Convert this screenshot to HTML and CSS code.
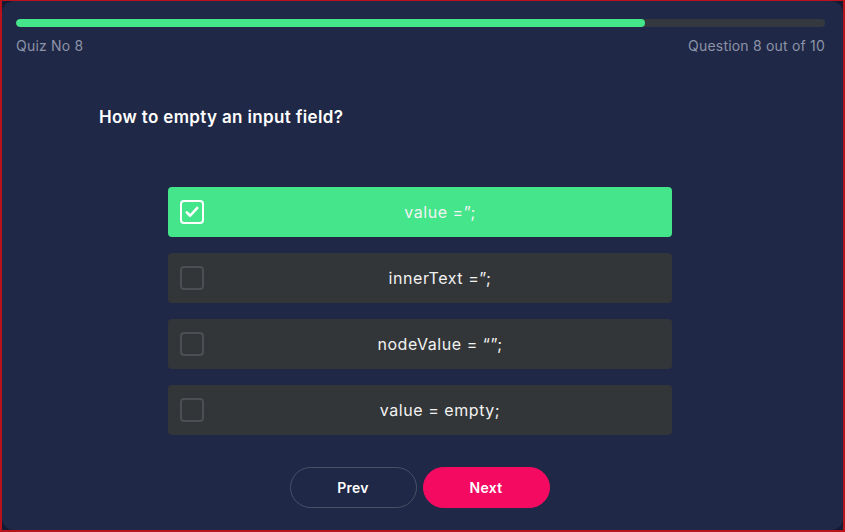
FILE: index.html
```html
<!DOCTYPE html>
<html>
<head>
<meta charset="utf-8">
<link rel="stylesheet" href="styles.css">
</head>
<body>
<div class="frame">
  <div class="card">
    <div class="progress"><div class="fill" style="width:77.8%"></div></div>
    <div class="meta">
      <span>Quiz No 8</span>
      <span>Question 8 out of 10</span>
    </div>
    <h1 class="question">How to empty an input field?</h1>
    <div class="options">
      <div class="option selected">
        <span class="box"><svg viewBox="0 0 24 24" width="18" height="18"><path d="M5 12.5l4.5 4.5L19 6.5" fill="none" stroke="#fff" stroke-width="3.4" stroke-linecap="round" stroke-linejoin="round"/></svg></span>
        <span class="label">value =”;</span>
      </div>
      <div class="option">
        <span class="box"></span>
        <span class="label">innerText =”;</span>
      </div>
      <div class="option">
        <span class="box"></span>
        <span class="label">nodeValue = “”;</span>
      </div>
      <div class="option">
        <span class="box"></span>
        <span class="label">value = empty;</span>
      </div>
    </div>
    <div class="buttons">
      <button class="btn prev">Prev</button>
      <button class="btn next">Next</button>
    </div>
  </div>
</div>
</body>
</html>
```

FILE: styles.css
```css
html, body {
  margin: 0;
  padding: 0;
  width: 845px;
  height: 532px;
  overflow: hidden;
  font-family: "Inter", "Noto Sans", sans-serif;
}
.frame {
  box-sizing: border-box;
  width: 845px;
  height: 532px;
  border-style: solid;
  border-color: #b8121c;
  border-width: 1px 2px 2px 2px;
  background: #141a33;
}
.card {
  box-sizing: border-box;
  height: 100%;
  background: #1f2846;
  border-radius: 12px;
  padding: 18px 18px 0 14px;
}
.progress {
  height: 8px;
  background: #34393f;
  border-radius: 4px;
  overflow: hidden;
}
.fill {
  height: 100%;
  background: #45e68b;
  border-radius: 4px;
}
.meta {
  display: flex;
  justify-content: space-between;
  margin-top: 9px;
  font-size: 14px;
  line-height: 20px;
  color: #8d93a8;
  letter-spacing: 0.2px;
}
.question {
  margin: 49px 0 0 83px;
  font-size: 17px;
  line-height: 24px;
  font-weight: 600;
  color: #ffffff;
  letter-spacing: 0.35px;
}
.options {
  width: 504px;
  margin: 58px 0 0 152px;
  display: flex;
  flex-direction: column;
  gap: 16px;
}
.option {
  height: 50px;
  box-sizing: border-box;
  display: flex;
  align-items: center;
  padding-left: 12px;
  background: #333638;
  border-radius: 4px;
}
.option.selected {
  background: #45e68b;
}
.box {
  box-sizing: border-box;
  width: 24px;
  height: 24px;
  border: 2px solid #4b4e52;
  border-radius: 4px;
  display: flex;
  align-items: center;
  justify-content: center;
}
.selected .box {
  border-color: #ffffff;
}
.label {
  flex: 1;
  text-align: center;
  font-size: 16px;
  color: #f2f2f2;
  letter-spacing: 0.55px;
  padding-left: 4px;
}
.buttons {
  display: flex;
  justify-content: center;
  gap: 6px;
  margin: 32px 0 0 -2px;
}
.btn {
  width: 127px;
  height: 41px;
  border-radius: 21px;
  font-family: inherit;
  font-size: 14px;
  font-weight: 600;
  color: #ffffff;
  letter-spacing: 0.3px;
  cursor: pointer;
}
.prev {
  background: transparent;
  border: 1px solid #4a5168;
}
.next {
  background: #f50a62;
  border: 1px solid #f50a62;
}
```
